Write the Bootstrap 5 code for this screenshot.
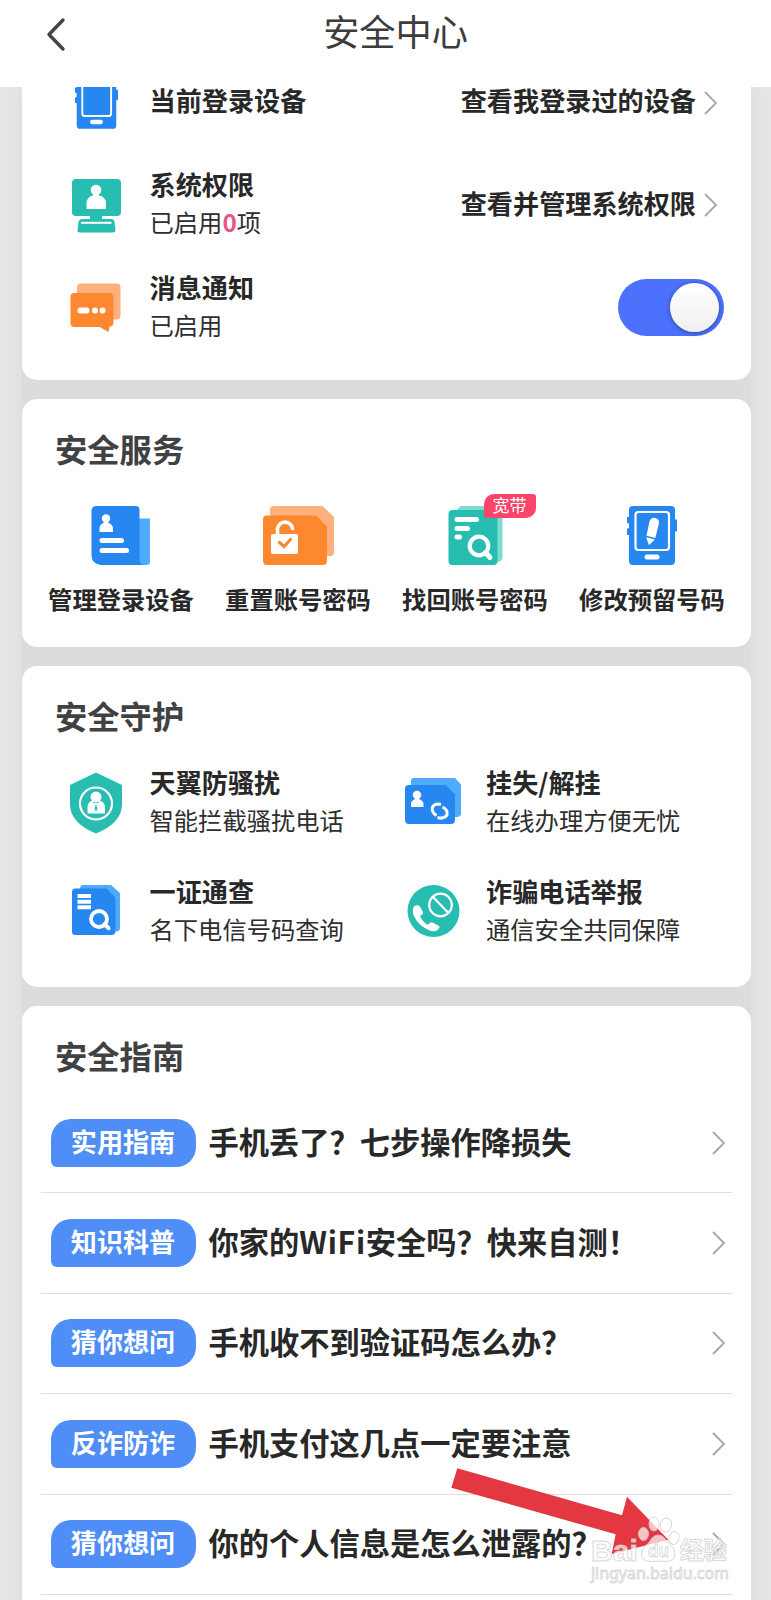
<!DOCTYPE html>
<html lang="zh-CN">
<head>
<meta charset="utf-8">
<meta name="viewport" content="width=device-width, initial-scale=1">
<title>安全中心</title>
<link href="https://cdn.jsdelivr.net/npm/bootstrap@5.3.0/dist/css/bootstrap.min.css" rel="stylesheet">
<style>
body{font-family:"Noto Sans CJK SC",sans-serif;background:#e6e6e6;color:#282828;height:1600px;overflow:hidden;position:relative}
.topbar{height:87px;background:#fff;padding:0 51px 20px 45px}
.topbar h1{font-size:36.2px;line-height:61px;color:#3c3c3c;font-weight:400}
.scroll-area{height:1513px;overflow:hidden}
.stack{width:728.5px;background:#dcdcdc;box-shadow:0 0 18px 2px #dcdcdc;gap:19px;margin-left:22px;height:1560px}
.panel{background:#fff;border:0;border-radius:15px}
.p-device{margin-top:-35px;height:328px;padding:0 27px 0 47px}
.p-service{height:248px;padding:0 10px}
.p-guard{height:321px;padding:0 10px}
.p-guide{height:640px;padding:0 18.500px 0 19px}
.sect{font-size:32.3px;line-height:44px;font-weight:700;color:#3f4142;margin:0;padding-top:26.500px}
.p-service .sect,.p-guard .sect{margin-left:23px}
.p-guide .sect{margin-left:14px}
.svc-list{padding-top:36px}
.guard-list{padding:28.500px 0 0 37px;row-gap:31px;margin-right:-10px}
.guide-list{padding-top:16.500px}
.setting{height:102.5px}
.icon-cell{width:54px;flex:none}
.txt{margin-left:26.500px;margin-bottom:5px}
.name{font-size:26.150px;line-height:38px;font-weight:700;white-space:nowrap}
.go{margin-bottom:5px}
.tight{line-height:27px}
.sub{font-size:24.300px;line-height:38px;white-space:nowrap;color:#2e2e2e}
.sub b{color:#e8557f}
.switch{width:106px;height:57px;border-radius:29px;background:#4c72fd;margin-bottom:1px}
.knob{width:49px;height:49px;border-radius:50%;background:linear-gradient(#fff,#efefef);box-shadow:0 1px 5px rgba(0,0,0,.4);margin-right:5px}
.chev-top{margin:0 5px 1px 6.500px}
.svc{width:177px}
.svc .lab{font-size:24.3px;line-height:34px;font-weight:700;margin:17px 0 0 1px}
.svc-badge{position:absolute;left:97.5px;top:-12px;width:52px;height:24px;background:#fc4369;color:#fff;font-size:17px;line-height:22px;text-align:center;border-radius:10px 3px 10px 3px}
.guard-item{width:336.5px;height:76px}
.lower .txt{margin-bottom:0}
.guide-row{height:100.4px;border-bottom:1.4px solid #dedede;padding:0 5px 0 9.500px}
.tagbox{width:145px;height:48px;line-height:45px;background:#4f8ef7;color:#fff;font-size:26.1px;font-weight:700;border-radius:20px 20px 20px 6px;text-align:center;flex:none}
.q{font-size:30.25px;line-height:44px;font-weight:700;margin:-4px 0 0 13px;white-space:nowrap}
.latin{letter-spacing:.7px}
.overlay{position:absolute;left:440px;top:1450px}
svg{display:block}
</style>
</head>
<body>
<svg width="0" height="0" class="position-absolute">
  <defs>
    <symbol id="chev" viewBox="0 0 16 26"><path d="M2 2 13 13 2 24" fill="none" stroke="#a6a6a6" stroke-width="1.8"/></symbol>
    <symbol id="phone" viewBox="0 0 50 59">
      <path d="M6 0H44a4 4 0 0 1 4 4V13.500h2v12H48V55a4 4 0 0 1-4 4H6a4 4 0 0 1-4-4V29H0V23l2-1.500V18L0 16.500V11H2V4A4 4 0 0 1 6 0Z" fill="#2787f0"/>
      <rect x="8.500" y="6" width="33.500" height="38" rx="3" fill="none" stroke="#fff" stroke-width="2.200"/>
      <rect x="17.500" y="48.500" width="15" height="5" rx="2.500" fill="#fff"/>
    </symbol>
  </defs>
</svg>
<header class="topbar d-flex position-relative">
  <svg width="22" height="36" viewBox="0 0 22 36" class="mt-3"><path d="M18 4 4 18.500 18 33" fill="none" stroke="#444" stroke-width="3.400" stroke-linecap="round" stroke-linejoin="round"/></svg>
  <h1 class="flex-fill text-center mb-0 ms-1">安全中心</h1>
</header>
<main class="scroll-area">
  <div class="stack d-flex flex-column">
    <section class="card panel p-device">
      <div class="setting d-flex align-items-center">
        <div class="icon-cell d-flex justify-content-center"><svg width="43" height="51"><use href="#phone"/></svg></div>
        <div class="txt name tight">当前登录设备</div>
        <div class="name tight go ms-auto">查看我登录过的设备</div>
        <svg width="16" height="26" class="chev-top"><use href="#chev"/></svg>
      </div>
      <div class="setting d-flex align-items-center">
        <svg class="icon-cell" width="54" height="60" viewBox="69 176 54 60">
          <rect x="72" y="179" width="49" height="37" rx="4" fill="#27bdb0"/>
          <path d="M90 215h12v4h9q3 0 3.500 3l1 8q0 2.500-3 2.500H80q-3 0-2.500-2.500l1-8q1-3 3.500-3h8Z" fill="#27bdb0"/>
          <path d="M81 222.800h30.500" stroke="#fff" stroke-width="2"/>
          <circle cx="96" cy="190" r="5.300" fill="#fff"/><path d="M93 193h6v2.500q7 1.500 7 8V209H86.500v-5.500q0-6.500 6.500-8Z" fill="#fff"/>
        </svg>
        <div class="txt"><div class="name">系统权限</div><div class="sub">已启用<b>0</b>项</div></div>
        <div class="name go ms-auto">查看并管理系统权限</div>
        <svg width="16" height="26" class="chev-top"><use href="#chev"/></svg>
      </div>
      <div class="setting d-flex align-items-center">
        <svg class="icon-cell" width="54" height="60" viewBox="69.500 277.500 54 60">
          <rect x="77.500" y="283" width="43.500" height="36" rx="4" fill="#ffb07c"/>
          <path d="M75 292.500h35a4 4 0 0 1 4 4V322a4 4 0 0 1-4 4l-1 5.500-9-5H75a4 4 0 0 1-4-4v-26a4 4 0 0 1 4-4Z" fill="#fd8830"/>
          <rect x="78" y="307" width="12" height="6" rx="3" fill="#fff"/><circle cx="95.500" cy="310" r="3" fill="#fff"/><circle cx="103" cy="310" r="3" fill="#fff"/>
        </svg>
        <div class="txt"><div class="name">消息通知</div><div class="sub">已启用</div></div>
        <div class="switch d-flex align-items-center justify-content-end ms-auto"><div class="knob"></div></div>
      </div>
    </section>

    <section class="card panel p-service">
      <h2 class="sect">安全服务</h2>
      <div class="svc-list d-flex">
        <div class="svc d-flex flex-column align-items-center">
          <svg width="60" height="59" viewBox="91 506 60 59">
            <path d="M138 518.500h12V562q0 3-4 3h-8Z" fill="#4fabfc"/>
            <path d="M96 506h39.500a4 4 0 0 1 4 4V560q.5 4 4 5H101q-9-1-9.500-9V510.500a4.500 4.500 0 0 1 4.500-4.500Z" fill="#2787f0"/>
            <circle cx="106" cy="518.500" r="4.200" fill="#fff"/><path d="M104 521h4v1.500q5 2 5 6V532H99.500v-3.500q0-4 4.500-6Z" fill="#fff"/>
            <path d="M102 540.500h19.500M102 550.500h24.500" stroke="#fff" stroke-width="5" stroke-linecap="round"/>
          </svg>
          <span class="lab">管理登录设备</span>
        </div>
        <div class="svc d-flex flex-column align-items-center">
          <svg width="72" height="59" viewBox="262 506 72 59">
            <path d="M274 506h48.500l11.500 11V552a4 4 0 0 1-4 4H274a4 4 0 0 1-4-4V510a4 4 0 0 1 4-4Z" fill="#ffb07c"/>
            <path d="M267 515.500h49l11 11V561a4 4 0 0 1-4 4H267a4 4 0 0 1-4-4V519.500a4 4 0 0 1 4-4Z" fill="#fd8830"/>
            <path d="M277.500 536v-5a7.500 7.500 0 0 1 15-2.500" fill="none" stroke="#fff" stroke-width="3.600" stroke-linecap="round"/>
            <rect x="271" y="534" width="27" height="20" rx="2" fill="#fff"/>
            <path d="m279.500 542.500 4.500 4 6.500-7" fill="none" stroke="#fd8830" stroke-width="3.200" stroke-linecap="round"/>
          </svg>
          <span class="lab">重置账号密码</span>
        </div>
        <div class="svc d-flex flex-column align-items-center position-relative">
          <svg width="56" height="59" viewBox="447.500 506 56 59">
            <path d="M461 506h38a4 4 0 0 1 4 4V557q0 5-6 5H457V510Z" fill="#7bdccf"/>
            <path d="M453 510h41a4 4 0 0 1 4 4V561a4 4 0 0 1-4 4H453a4 4 0 0 1-4-4V514a4 4 0 0 1 4-4Z" fill="#27bdb0"/>
            <path d="M457.500 519.500H477M457.500 528.500h10.500M457.500 537h2.500" stroke="#fff" stroke-width="5" stroke-linecap="round"/>
            <circle cx="479.500" cy="546" r="9.300" fill="none" stroke="#fff" stroke-width="4.200"/><path d="m486 552.500 4.500 5" stroke="#fff" stroke-width="5" stroke-linecap="round"/>
          </svg>
          <span class="svc-badge">宽带</span>
          <span class="lab">找回账号密码</span>
        </div>
        <div class="svc d-flex flex-column align-items-center">
          <svg width="50" height="59" viewBox="0 0 50 59"><use href="#phone" width="50" height="59"/>
            <path d="m22.500 15.500q1.500-4.500 6-3.500 4.500 1.500 3.300 6L28.300 32l-8.800-2.200Z" fill="#fff"/><path d="m19.200 31.200 8.600 2.200-5 5.100q-1 .7-1.500-1Z" fill="#fff"/>
          </svg>
          <span class="lab">修改预留号码</span>
        </div>
      </div>
    </section>

    <section class="card panel p-guard">
      <h2 class="sect">安全守护</h2>
      <div class="guard-list d-flex flex-wrap">
        <div class="guard-item d-flex align-items-center">
          <svg class="icon-cell" width="54" height="64" viewBox="69 771 54 64">
            <path d="M96 772.500 122 785v19q0 19-26 29.500Q70 823 70 804V785Z" fill="#27bdb0"/>
            <circle cx="96" cy="803.500" r="16" fill="none" stroke="#fff" stroke-width="2.200"/>
            <circle cx="96" cy="797" r="5.500" fill="#fff"/><path d="M91 801h10q4 2 4 6v6.500H87.500V807q0-4 3.500-6Z" fill="#fff"/>
            <path d="m93.500 801.500 5 2v-2l-5 2ZM96 804l1.500 5-1.500 2.500-1.500-2.500Z" fill="#27bdb0"/>
          </svg>
          <div class="txt"><div class="name">天翼防骚扰</div><div class="sub">智能拦截骚扰电话</div></div>
        </div>
        <div class="guard-item d-flex align-items-center">
          <svg class="icon-cell" width="54" height="60" viewBox="406 773 54 60" overflow="visible">
            <path d="M414 778h41l6 6.500V813q0 4-4 4H411V781a3 3 0 0 1 3-3Z" fill="#4fabfc"/>
            <path d="M408.500 785H446l9 9.500V820a4 4 0 0 1-4 4H409a4 4 0 0 1-4-4V788.500a3.500 3.500 0 0 1 3.500-3.500Z" fill="#2787f0"/>
            <circle cx="417" cy="795" r="4.200" fill="#fff"/><path d="M415 797h4v2q4.500 2 4.500 5v3H411v-3q0-3 4-5Z" fill="#fff"/>
            <path d="M441 804.500q-6-1.500-8.500 2.500-1.500 5 4 8.500M442.500 807q5.500 2.500 4.500 8-3 4.500-9.500 2.500" fill="none" stroke="#fff" stroke-width="3"/>
          </svg>
          <div class="txt"><div class="name">挂失/解挂</div><div class="sub">在线办理方便无忧</div></div>
        </div>
        <div class="guard-item lower d-flex align-items-center">
          <svg class="icon-cell" width="54" height="60" viewBox="69 880 54 60">
            <path d="M82 885h29l9 8v35q0 3.500-4 3.500H80V887Z" fill="#4fabfc"/>
            <path d="M75.500 888.500h31l9 9V931a4 4 0 0 1-4 4h-36a3.500 3.500 0 0 1-3.500-3.500V892a3.500 3.500 0 0 1 3.500-3.500Z" fill="#2787f0"/>
            <path d="M77.500 896h13.500M77.500 901.700h13.500M77.500 907.300h13.500" stroke="#fff" stroke-width="4"/>
            <circle cx="99" cy="919" r="8" fill="none" stroke="#fff" stroke-width="3.800"/><path d="m104.500 924.500 4 3.500" stroke="#fff" stroke-width="4.200" stroke-linecap="round"/>
          </svg>
          <div class="txt"><div class="name">一证通查</div><div class="sub">名下电信号码查询</div></div>
        </div>
        <div class="guard-item lower d-flex align-items-center">
          <svg class="icon-cell" width="54" height="60" viewBox="406 880 54 60">
            <circle cx="433.500" cy="911" r="26" fill="#27bdb0"/>
            <circle cx="440.500" cy="905" r="11.300" fill="none" stroke="#fff" stroke-width="2.200"/><path d="m433 897 15.500 16" stroke="#fff" stroke-width="2.200"/>
            <path d="M414 906.500q3-2 5.500-.5l3.500 6q.5 2-3 4 2 5 7.500 9 3-3.500 5-2.500l6.500 3.500q1.500 1.500-1.500 4-3.500 2.500-9 0-11-5-15-15-1.500-6 .5-8.500Z" fill="#fff"/>
          </svg>
          <div class="txt"><div class="name">诈骗电话举报</div><div class="sub">通信安全共同保障</div></div>
        </div>
      </div>
    </section>

    <section class="card panel p-guide">
      <h2 class="sect">安全指南</h2>
      <div class="guide-list">
        <div class="guide-row d-flex align-items-center"><span class="tagbox">实用指南</span><span class="q">手机丢了？七步操作降损失</span><svg class="ms-auto" width="16" height="26"><use href="#chev"/></svg></div>
        <div class="guide-row d-flex align-items-center"><span class="tagbox">知识科普</span><span class="q">你家的<span class="latin">WiFi</span>安全吗？快来自测！</span><svg class="ms-auto" width="16" height="26"><use href="#chev"/></svg></div>
        <div class="guide-row d-flex align-items-center"><span class="tagbox">猜你想问</span><span class="q">手机收不到验证码怎么办？</span><svg class="ms-auto" width="16" height="26"><use href="#chev"/></svg></div>
        <div class="guide-row d-flex align-items-center"><span class="tagbox">反诈防诈</span><span class="q">手机支付这几点一定要注意</span><svg class="ms-auto" width="16" height="26"><use href="#chev"/></svg></div>
        <div class="guide-row d-flex align-items-center"><span class="tagbox">猜你想问</span><span class="q">你的个人信息是怎么泄露的？</span><svg class="ms-auto" width="16" height="26"><use href="#chev"/></svg></div>
      </div>
    </section>
  </div>
</main>
<svg class="overlay" width="320" height="150" viewBox="440 1450 320 150">
  <path d="M457.300 1468.300 622 1515.300 627 1496.700 668.300 1539.700 611.700 1554 615.700 1534.300 451.300 1487.700Z" fill="#e33742"/>
  <g fill="#fff" fill-opacity=".7" stroke="#cfcfcf" stroke-opacity=".8" stroke-width="1">
    <ellipse cx="643.500" cy="1534" rx="5" ry="6.500"/><ellipse cx="654" cy="1524" rx="5" ry="7"/><ellipse cx="666" cy="1525" rx="5.500" ry="7" transform="rotate(15 666 1525)"/><ellipse cx="674" cy="1538" rx="5" ry="6.500" transform="rotate(15 674 1538)"/>
    <path d="M658 1535q5 0 8 5l8 9q4 12-8 12.500-8-1-15 0-12 0-9-11 2-4 7-8 4-7.500 9-7.500Z"/>
    <g font-weight="700"><text x="591" y="1560.500" font-family="Liberation Sans,sans-serif" font-size="30" textLength="47" lengthAdjust="spacingAndGlyphs">Bai</text>
    <text x="648" y="1557" font-family="Liberation Sans,sans-serif" font-size="19" textLength="21" lengthAdjust="spacingAndGlyphs">du</text>
    <text x="680" y="1558.500" font-family="Noto Sans CJK SC,sans-serif" font-size="23.500">经验</text></g>
    <text x="591" y="1578.500" font-family="Noto Sans,sans-serif" font-size="16.500" textLength="138" lengthAdjust="spacingAndGlyphs">jingyan.baidu.com</text>
  </g>
</svg>
<script src="https://cdn.jsdelivr.net/npm/bootstrap@5.3.0/dist/js/bootstrap.bundle.min.js"></script>
</body>
</html>
